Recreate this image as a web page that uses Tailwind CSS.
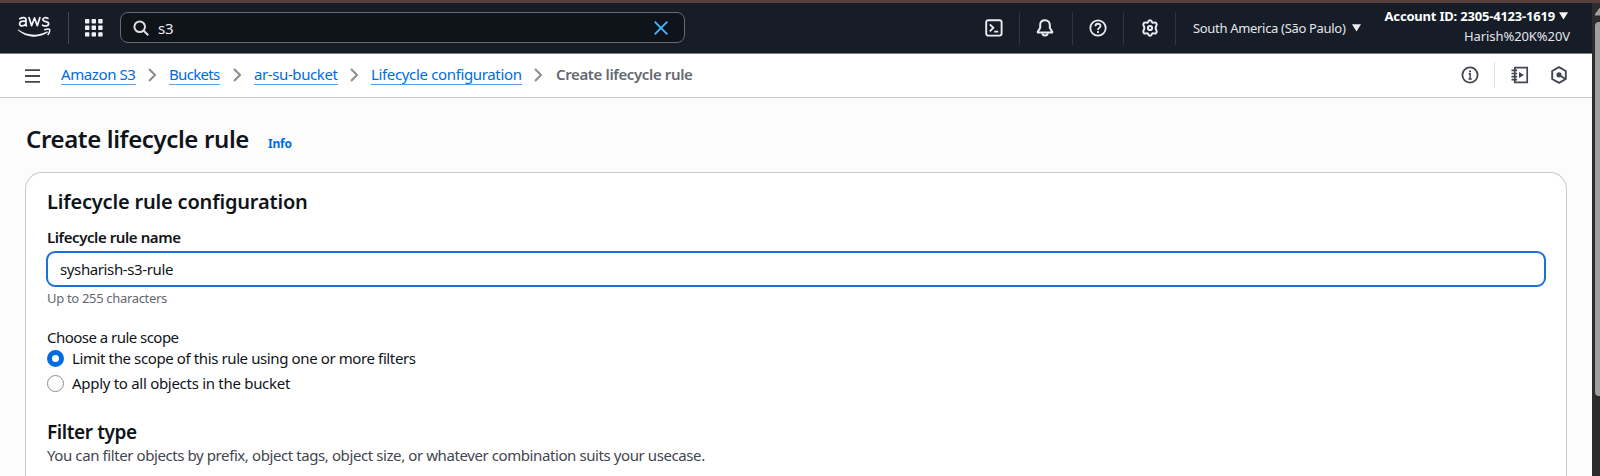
<!DOCTYPE html>
<html lang="en">
<head>
<meta charset="utf-8">
<title>Create lifecycle rule | S3</title>
<script src="https://cdn.jsdelivr.net/npm/@tailwindcss/browser@4"></script>
</head>
<body class="flex h-[476px] overflow-hidden bg-[#fcfcfd] font-['Noto_Sans',sans-serif] text-[15px] leading-5 text-[#0f141a]">
<div class="flex w-[1592px] shrink-0 flex-col">
  <header class="flex h-[54px] shrink-0 items-center border-t-3 border-b border-t-[#55403d] border-b-[#7d7f83] bg-[#161d26] text-[#e3e5ec]">
    <svg class="ml-[17px] h-[24px] w-[35px] shrink-0 overflow-visible" viewBox="0 0 35 24" fill="none">
      <g stroke="#f3f3f7" stroke-width="1.75" stroke-linejoin="round" stroke-linecap="round">
        <path d="M2.8 2.7C5.6 1.1 9 1.1 9 4.2V8.8L9.4 9.9M9 5.3C5.5 4.6 2.6 5.4 2.6 7.8C2.6 10.8 7.4 10.6 9 7.7"/>
        <path d="M12 1.6L14.6 9.7L17.5 2L20.3 9.7L22.9 1.6"/>
        <path d="M31 2.4C28.8 1.2 25.9 1.5 25.9 3.6C25.9 6.6 31.6 4.8 31.6 7.8C31.6 10.3 28 10.4 25.6 9.2"/>
      </g>
      <path d="M1.2 13.6C10 20 21.5 20.2 29.8 15.6C30.7 15.1 31.3 16 30.6 16.6C22.4 22.6 9.6 22.2 .9 14.2C.5 13.8.7 13.3 1.2 13.6Z" fill="#f3f3f7"/>
      <path d="M27.6 13.8C29.5 13 32 12.9 32.6 13.4C33.1 14.2 32.2 17 31 18.5" stroke="#f3f3f7" stroke-width="1.5" stroke-linecap="round"/>
    </svg>
    <div class="ml-4 h-8 w-px shrink-0 bg-[#424650]"></div>
    <svg class="ml-4 h-[18px] w-[18px] shrink-0" viewBox="0 0 18 18" fill="#f0f1f7">
      <rect x="0" y="0" width="4.4" height="4.4" rx=".7"/><rect x="6.6" y="0" width="4.4" height="4.4" rx=".7"/><rect x="13.2" y="0" width="4.4" height="4.4" rx=".7"/>
      <rect x="0" y="6.6" width="4.4" height="4.4" rx=".7"/><rect x="6.6" y="6.6" width="4.4" height="4.4" rx=".7"/><rect x="13.2" y="6.6" width="4.4" height="4.4" rx=".7"/>
      <rect x="0" y="13.2" width="4.4" height="4.4" rx=".7"/><rect x="6.6" y="13.2" width="4.4" height="4.4" rx=".7"/><rect x="13.2" y="13.2" width="4.4" height="4.4" rx=".7"/>
    </svg>
    <div class="mb-[1px] ml-[17px] flex h-[31px] w-[565px] shrink-0 items-center rounded-lg border border-[#656a76] bg-[#0f141a] pr-[16px] pl-3">
      <svg class="h-4 w-4" viewBox="0 0 16 16" fill="none" stroke="#dedee3" stroke-width="2"><circle cx="6.7" cy="6.7" r="5.3"/><path d="M10.5 10.5L15.2 15.2"/></svg>
      <span class="ml-[9px] tracking-[-0.3px] text-[#ebebf0]">s3</span>
      <svg class="ml-auto h-[14px] w-[14px]" viewBox="0 0 14 14" fill="none" stroke="#42b4ff" stroke-width="1.9"><path d="M.7.7L13.3 13.3M13.3.7L.7 13.3"/></svg>
    </div>
    <svg class="ml-[300px] h-[18px] w-[18px] shrink-0" viewBox="0 0 18 18" fill="none" stroke="#e9ebf3" stroke-width="1.9"><rect x="1.2" y="1.2" width="15.4" height="15.4" rx="2"/><path d="M4.8 5.3L8.3 8.8L4.8 12.3M9.2 12.6H13.2"/></svg>
    <div class="ml-4 h-[33px] w-px shrink-0 bg-[#2f3641]"></div>
    <svg class="ml-[16px] h-[18px] w-[18px] shrink-0" viewBox="0 0 18 18" fill="none" stroke="#e9ebf3" stroke-width="2" stroke-linejoin="round"><path d="M9 1.3C5.8 1.3 4.2 3.4 4.2 6V8.7L1.8 12.8V13.6H16.2V12.8L13.8 8.7V6C13.8 3.4 12.2 1.3 9 1.3Z"/><path d="M6.4 14.3C6.6 17.3 11.4 17.3 11.6 14.3"/></svg>
    <div class="ml-[18px] h-[33px] w-px shrink-0 bg-[#2f3641]"></div>
    <svg class="ml-4 h-[18px] w-[18px] shrink-0" viewBox="0 0 18 18" fill="none" stroke="#e9ebf3" stroke-width="1.8"><circle cx="9" cy="9" r="7.7"/><path d="M6.4 7.2C6.4 3.9 11.6 4 11.5 7C11.4 9 9 8.8 9 11"/><path d="M9 12.1V13.9"/></svg>
    <div class="ml-4 h-[33px] w-px shrink-0 bg-[#2f3641]"></div>
    <svg class="ml-[17px] h-[18px] w-[18px] shrink-0" viewBox="0 0 18 18" fill="none" stroke="#e9ebf3" stroke-width="2" stroke-linejoin="round"><path d="M9 1.2C10.6 1.2 10.8 3.2 11.4 3.6C12.3 4.1 13.8 2.9 15.1 3.9C17 5.8 14.6 7 14.6 9C14.6 11 17 12.2 15.1 14.1C13.8 15.1 12.3 13.9 11.4 14.4C10.8 14.8 10.6 16.8 9 16.8C7.4 16.8 7.2 14.8 6.6 14.4C5.7 13.9 4.2 15.1 2.9 14.1C1 12.2 3.4 11 3.4 9C3.4 7 1 5.8 2.9 3.9C4.2 2.9 5.7 4.1 6.6 3.6C7.2 3.2 7.4 1.2 9 1.2Z"/><circle cx="9" cy="9" r="2.1"/></svg>
    <div class="ml-4 h-[33px] w-px shrink-0 bg-[#2f3641]"></div>
    <span class="ml-[17px] w-[153px] shrink-0 text-[13px] tracking-[-0.32px] whitespace-nowrap">South America (São Paulo)</span>
    <svg class="ml-[6px] h-[8px] w-[9px] shrink-0" viewBox="0 0 9 8" fill="#e9ebf3"><path d="M0 .3H9L4.5 7.6Z"/></svg>
    <div class="mr-[22px] ml-auto flex h-full flex-col items-end whitespace-nowrap">
      <div class="mt-[3px] mr-[2px] flex items-center text-[13px] font-bold tracking-[-0.2px] text-white">Account ID: 2305-4123-1619<svg class="ml-[4px] h-[8px] w-[9px]" viewBox="0 0 9 8" fill="#f6f6f9"><path d="M0 .3H9L4.5 7.6Z"/></svg></div>
      <div class="text-[13px] tracking-[-0.08px]">Harish%20K%20V</div>
    </div>
  </header>
  <nav class="flex h-[44px] shrink-0 items-center border-b border-[#c6c6cd] bg-white pb-[2px] whitespace-nowrap text-[#006ce0]">
    <svg class="mt-[2px] ml-[25px] h-[14px] w-[15px]" viewBox="0 0 15 14" fill="none" stroke="#424650" stroke-width="1.8"><path d="M0 1.2H15M0 7H15M0 12.8H15"/></svg>
    <a class="ml-[21px] h-5 w-[75px] border-b border-[#5c9fe6] leading-[18px] tracking-[-0.4px]">Amazon S3</a>
    <svg class="mt-[1px] ml-[12px] h-[14px] w-[8px]" viewBox="0 0 8 14" fill="none" stroke="#8c8c94" stroke-width="2"><path d="M1 1L7 7L1 13"/></svg>
    <a class="ml-[13px] h-5 w-[51px] border-b border-[#5c9fe6] leading-[18px] tracking-[-0.68px]">Buckets</a>
    <svg class="mt-[1px] ml-[13px] h-[14px] w-[8px]" viewBox="0 0 8 14" fill="none" stroke="#8c8c94" stroke-width="2"><path d="M1 1L7 7L1 13"/></svg>
    <a class="ml-[13px] h-5 w-[84px] border-b border-[#5c9fe6] leading-[18px] tracking-[-0.4px]">ar-su-bucket</a>
    <svg class="mt-[1px] ml-[12px] h-[14px] w-[8px]" viewBox="0 0 8 14" fill="none" stroke="#8c8c94" stroke-width="2"><path d="M1 1L7 7L1 13"/></svg>
    <a class="ml-[13px] h-5 w-[151px] border-b border-[#5c9fe6] leading-[18px] tracking-[-0.35px]">Lifecycle configuration</a>
    <svg class="mt-[1px] ml-[12px] h-[14px] w-[8px]" viewBox="0 0 8 14" fill="none" stroke="#8c8c94" stroke-width="2"><path d="M1 1L7 7L1 13"/></svg>
    <span class="ml-[14px] h-5 leading-[18px] font-semibold tracking-[-0.37px] text-[#656871]">Create lifecycle rule</span>
    <svg class="mt-[1px] ml-auto h-[18px] w-[18px]" viewBox="0 0 18 18" fill="none" stroke="#424650" stroke-width="1.8"><circle cx="9" cy="9" r="7.6"/><path d="M9 4.4V6.3" stroke-width="2"/><path d="M7.6 7.8H9.1V12.6M7.4 12.9H10.8" stroke-width="1.5"/></svg>
    <div class="mr-4 ml-[15px] h-[26px] w-px bg-[#dedee3]"></div>
    <svg class="mt-[1px] h-[18px] w-[18px]" viewBox="0 0 18 18" fill="none" stroke="#424650" stroke-width="1.7"><path d="M3.8 3V1.6H16.2V16.4H3.8V15M.5 4.4H6.2M.5 7.5H6.2M.5 10.6H6.2M.5 13.7H6.2M3.8 3V15"/><path d="M8 5.9L13 9L8 12.1Z" fill="#424650" stroke="none"/></svg>
    <svg class="mt-[1px] mr-[24px] ml-[21px] h-[18px] w-[18px]" viewBox="0 0 18 18" fill="none" stroke="#424650" stroke-width="1.9" stroke-linejoin="round"><path d="M9 1.2L15.8 5V13L9 16.8L2.2 13V5Z"/><circle cx="9" cy="8.8" r="2.6" fill="#424650" stroke="none"/><path d="M9 8.8L15.3 13"/></svg>
  </nav>
  <main class="flex min-h-0 grow flex-col px-[25px]">
    <div class="flex h-[74px] shrink-0 items-baseline pt-[25px] whitespace-nowrap">
      <h1 class="ml-[1px] w-[223px] text-[24px] leading-8 font-semibold tracking-[-0.37px]">Create lifecycle rule</h1>
      <a class="ml-[19px] text-[12px] font-bold tracking-[-0.2px] text-[#006ce0]">Info</a>
    </div>
    <section class="flex min-h-0 grow flex-col rounded-t-[17px] border border-b-0 border-[#c9cbd1] bg-white px-5 pt-[15px]">
      <h2 class="ml-[1px] text-[20px] leading-7 font-semibold tracking-[-0.18px]">Lifecycle rule configuration</h2>
      <label class="mt-[11px] ml-[1px] font-semibold tracking-[-0.42px]">Lifecycle rule name</label>
      <div class="mt-[4px] flex h-[36px] items-center rounded-[9px] border-2 border-[#1b70d8] bg-white pl-3 tracking-[-0.38px]">sysharish-s3-rule</div>
      <p class="mt-[2px] ml-[1px] text-[13px] leading-[18px] tracking-[-0.32px] text-[#656871]">Up to 255 characters</p>
      <p class="mt-5 ml-[1px] tracking-[-0.53px]">Choose a rule scope</p>
      <div class="mt-[1px] ml-[1px] flex items-center gap-2 tracking-[-0.39px]"><span class="mt-[1px] size-[17px] rounded-full border-[5px] border-[#006ce0] bg-white"></span>Limit the scope of this rule using one or more filters</div>
      <div class="mt-[5px] ml-[1px] flex items-center gap-2 tracking-[-0.29px]"><span class="mt-[1px] size-[17px] rounded-full border border-[#8c8c94] bg-white"></span>Apply to all objects in the bucket</div>
      <h3 class="mt-[26px] ml-[1px] text-[19px] leading-[26px] font-semibold tracking-[-0.4px]">Filter type</h3>
      <p class="ml-[1px] tracking-[-0.41px] text-[#424650]">You can filter objects by prefix, object tags, object size, or whatever combination suits your usecase.</p>
    </section>
  </main>
</div>
<aside class="flex w-[8px] shrink-0 flex-col border-t-3 border-t-[#55403d] bg-[#2c2c2c] pl-[3px]">
  <svg class="mt-[5px] h-[8px] w-[5px]" viewBox="0 0 5 8" fill="#9f9f9f"><path d="M0 7.5V6L4.5 0H5V7.5Z"/></svg>
  <div class="mt-[6px] h-[374px] rounded-l-[4px] bg-[#9f9f9f]"></div>
</aside>
</body>
</html>
